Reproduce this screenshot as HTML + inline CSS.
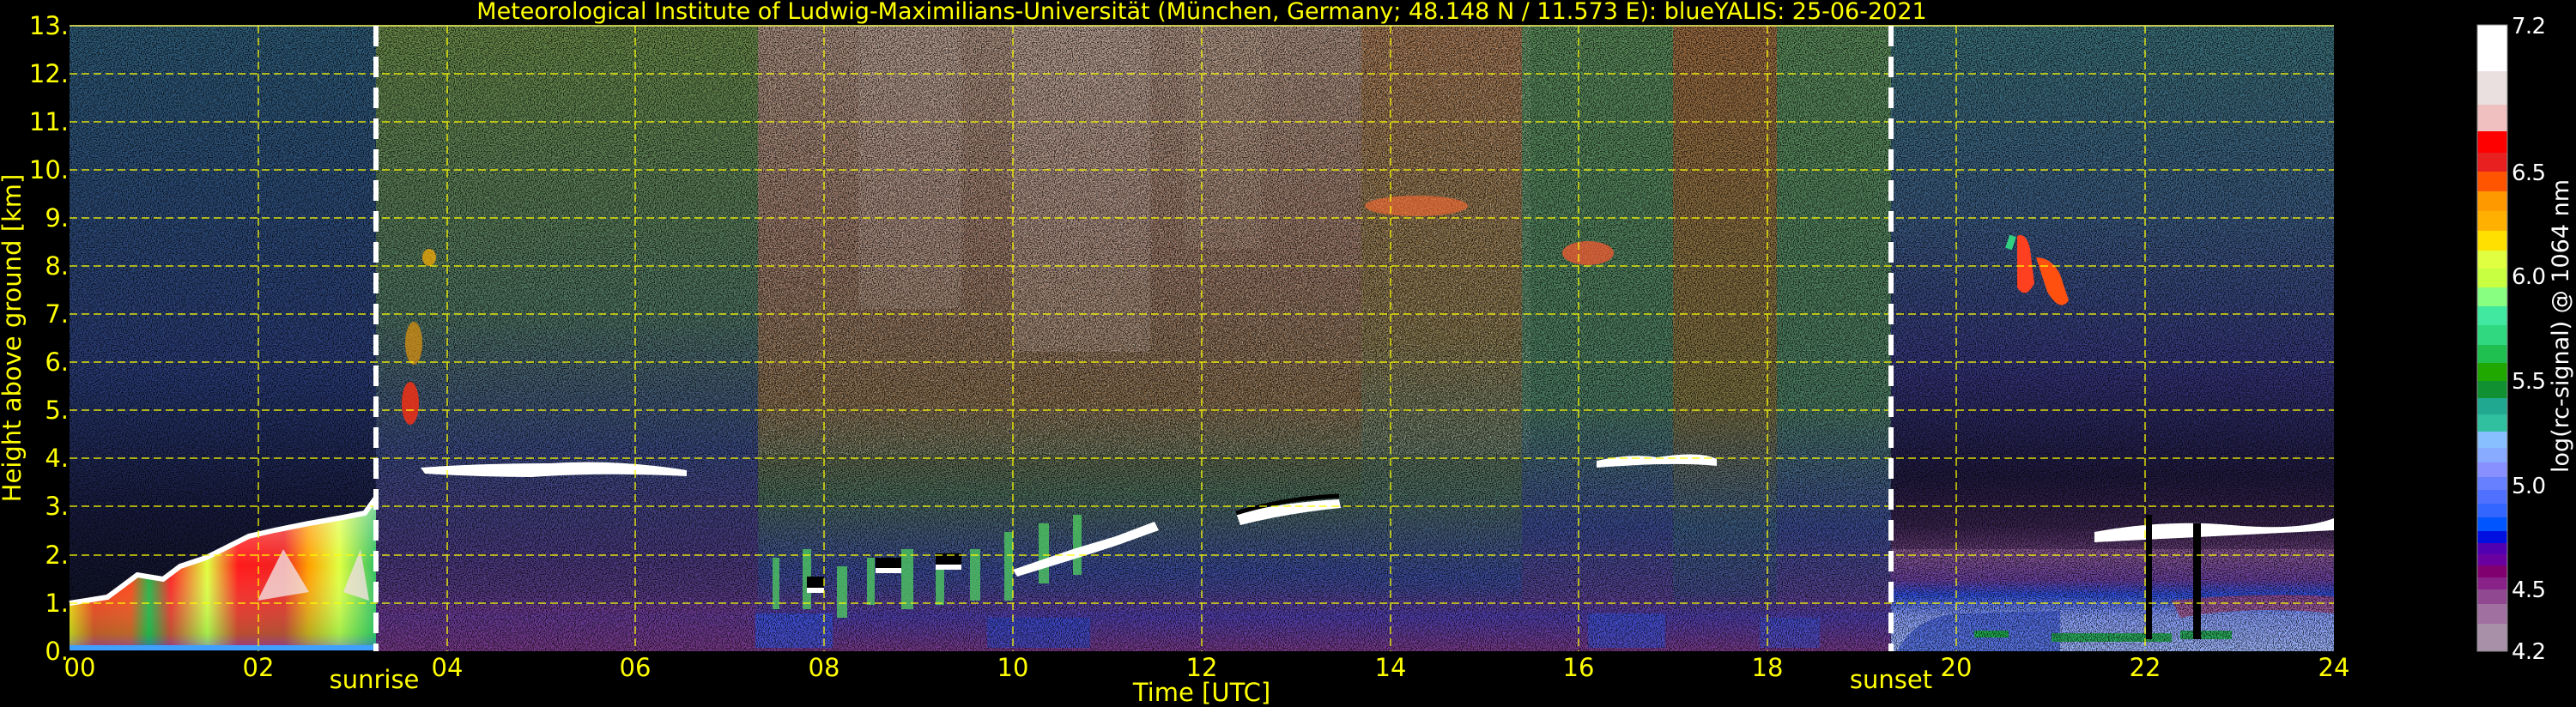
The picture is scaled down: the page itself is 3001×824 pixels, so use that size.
<!DOCTYPE html>
<html><head><meta charset="utf-8"><style>
html,body{margin:0;padding:0;background:#000;}
svg{display:block}
text{font-family:"DejaVu Sans","Liberation Sans",sans-serif;}
</style></head><body>
<svg width="3001" height="824" viewBox="0 0 3001 824" xmlns="http://www.w3.org/2000/svg">
<defs>
<filter id="spk" x="0" y="0" width="100%" height="100%">
<feTurbulence type="fractalNoise" baseFrequency="0.85" numOctaves="1" seed="3"/>
<feColorMatrix type="matrix" values="0 0 0 0 0  0 0 0 0 0  0 0 0 0 0  -9 0 0 0 4.7"/>
</filter>
<filter id="spkw" x="0" y="0" width="100%" height="100%">
<feTurbulence type="fractalNoise" baseFrequency="0.8" numOctaves="1" seed="9"/>
<feColorMatrix type="matrix" values="0 0 0 0 1  0 0 0 0 1  0 0 0 0 1  9 0 0 0 -5.2"/>
</filter>
<linearGradient id="gA" x1="0" y1="0" x2="0" y2="1">
<stop offset="0" stop-color="#2e5c78"/><stop offset="0.55" stop-color="#2a3c78"/><stop offset="0.78" stop-color="#181c40"/><stop offset="1" stop-color="#101020"/></linearGradient>
<linearGradient id="gB" x1="0" y1="0" x2="0" y2="1">
<stop offset="0" stop-color="#6a8a48"/><stop offset="0.45" stop-color="#4e7460"/><stop offset="0.68" stop-color="#3a4880"/><stop offset="0.85" stop-color="#4a3a80"/><stop offset="1" stop-color="#6a3a8a"/></linearGradient>
<linearGradient id="gC" x1="0" y1="0" x2="0" y2="1">
<stop offset="0" stop-color="#a08474"/><stop offset="0.35" stop-color="#8c6a5a"/><stop offset="0.6" stop-color="#7a6040"/><stop offset="0.75" stop-color="#4a6a58"/><stop offset="0.87" stop-color="#3a4a98"/><stop offset="1" stop-color="#6a3a90"/></linearGradient>
<linearGradient id="gD" x1="0" y1="0" x2="0" y2="1">
<stop offset="0" stop-color="#9a6c48"/><stop offset="0.5" stop-color="#7a6a40"/><stop offset="0.75" stop-color="#4a6a60"/><stop offset="0.88" stop-color="#3a4a98"/><stop offset="1" stop-color="#6a3a90"/></linearGradient>
<linearGradient id="gE" x1="0" y1="0" x2="0" y2="1">
<stop offset="0" stop-color="#5a8a58"/><stop offset="0.6" stop-color="#4a7a60"/><stop offset="0.8" stop-color="#3a4a90"/><stop offset="1" stop-color="#6a3a90"/></linearGradient>
<linearGradient id="gF" x1="0" y1="0" x2="0" y2="1">
<stop offset="0" stop-color="#9a6a40"/><stop offset="0.6" stop-color="#7a7040"/><stop offset="0.8" stop-color="#3a5a80"/><stop offset="1" stop-color="#4a3a90"/></linearGradient>
<linearGradient id="gH" x1="0" y1="0" x2="0" y2="1">
<stop offset="0" stop-color="#3a7078"/><stop offset="0.3" stop-color="#3a5a80"/><stop offset="0.55" stop-color="#34347a"/><stop offset="0.72" stop-color="#201a40"/><stop offset="0.8" stop-color="#3a2450"/><stop offset="0.86" stop-color="#7a4a88"/><stop offset="1" stop-color="#8a5a90"/></linearGradient>
<linearGradient id="aer" x1="0" y1="0" x2="1" y2="0">
<stop offset="0" stop-color="#ffd000"/><stop offset="0.08" stop-color="#ff3010"/><stop offset="0.2" stop-color="#ff4010"/><stop offset="0.26" stop-color="#20b040"/><stop offset="0.33" stop-color="#ff2020"/><stop offset="0.45" stop-color="#e0ff40"/><stop offset="0.55" stop-color="#ff1a1a"/><stop offset="0.7" stop-color="#f02020"/><stop offset="0.78" stop-color="#ffa000"/><stop offset="0.88" stop-color="#e0ff40"/><stop offset="1" stop-color="#30c060"/></linearGradient>
<linearGradient id="aerv" x1="0" y1="0" x2="0" y2="1">
<stop offset="0" stop-color="#fff" stop-opacity="0.45"/><stop offset="0.45" stop-color="#fff" stop-opacity="0"/><stop offset="0.9" stop-color="#20c060" stop-opacity="0.3"/><stop offset="1" stop-color="#3050ff" stop-opacity="0.5"/></linearGradient>
<linearGradient id="bl" x1="0" y1="0" x2="0" y2="1">
<stop offset="0" stop-color="#6a3a90" stop-opacity="0"/><stop offset="0.4" stop-color="#5040b0"/><stop offset="1" stop-color="#7a3a8a"/></linearGradient>
<linearGradient id="ev" x1="0" y1="0" x2="0" y2="1">
<stop offset="0" stop-color="#8a5a90"/><stop offset="0.3" stop-color="#6a40a0"/><stop offset="0.45" stop-color="#3050e0"/><stop offset="0.65" stop-color="#8aa0ff"/><stop offset="1" stop-color="#a0b8ff"/></linearGradient>
</defs>

<rect x="81" y="30" width="357" height="729" fill="url(#gA)"/>
<rect x="438" y="30" width="445" height="729" fill="url(#gB)"/>
<rect x="883" y="30" width="703" height="729" fill="url(#gC)"/>
<rect x="1586" y="30" width="187" height="729" fill="url(#gD)"/>
<rect x="1773" y="30" width="176" height="729" fill="url(#gE)"/>
<rect x="1949" y="30" width="121" height="729" fill="url(#gF)"/>
<rect x="2070" y="30" width="133" height="729" fill="url(#gE)"/>
<rect x="2203" y="30" width="516" height="729" fill="url(#gH)"/>
<rect x="1000" y="30" width="120" height="330" fill="#c8b8b0" opacity="0.25"/>
<rect x="1180" y="30" width="160" height="380" fill="#d0c0b8" opacity="0.25"/>
<rect x="1380" y="30" width="90" height="260" fill="#c0a890" opacity="0.2"/>
<!-- ground layers -->
<rect x="438" y="690" width="1765" height="69" fill="url(#bl)"/>
<rect x="440" y="705" width="440" height="54" fill="#7a3a8a" opacity="0.6"/>
<rect x="880" y="715" width="90" height="40" fill="#3a5aee" opacity="0.7"/>
<rect x="1150" y="720" width="120" height="35" fill="#3050e0" opacity="0.6"/>
<rect x="1850" y="715" width="90" height="40" fill="#3a5aee" opacity="0.6"/>
<rect x="2050" y="720" width="70" height="35" fill="#3a5aee" opacity="0.5"/>
<!-- evening layers -->
<rect x="2203" y="640" width="516" height="119" fill="url(#ev)"/>
<path d="M2210 759 Q2230 720 2280 715 L2400 712 L2400 759Z" fill="#3050e0" opacity="0.6"/>
<rect x="2300" y="735" width="40" height="8" fill="#20b050"/>
<rect x="2390" y="738" width="140" height="10" fill="#20b050" opacity="0.9"/>
<rect x="2540" y="735" width="60" height="10" fill="#20b050" opacity="0.9"/>
<path d="M2530 700 Q2620 690 2719 695 L2719 715 Q2620 705 2540 720Z" fill="#b04878" opacity="0.7"/>

<!-- speckle -->
<rect x="81" y="30" width="2638" height="729" filter="url(#spk)" opacity="0.7"/>
<rect x="883" y="30" width="900" height="500" filter="url(#spkw)" opacity="0.45"/>

<!-- cloud line evening -->
<path d="M2440 620 Q2520 605 2600 612 T2719 604 L2719 618 L2440 632Z" fill="#fff"/>
<rect x="2500" y="600" width="7" height="145" fill="#000"/>
<rect x="2555" y="610" width="9" height="135" fill="#000"/>

<!-- aerosol blob (night) -->
<path d="M81 703 L100 700 L125 696 L140 685 L160 670 L190 675 L210 660 L240 650 L260 640 L290 625 L320 618 L360 610 L400 603 L425 598 L438 580 L438 755 L81 755Z" fill="url(#aer)"/>
<path d="M81 703 L100 700 L125 696 L140 685 L160 670 L190 675 L210 660 L240 650 L260 640 L290 625 L320 618 L360 610 L400 603 L425 598 L438 580 L438 755 L81 755Z" fill="url(#aerv)"/>
<path d="M81 703 L100 700 L125 696 L140 685 L160 670 L190 675 L210 660 L240 650 L260 640 L290 625 L320 618 L360 610 L400 603 L425 598 L438 580" fill="none" stroke="#fff" stroke-width="6"/>
<path d="M300 700 L330 640 L360 690Z M400 690 L420 640 L430 700Z" fill="#f2e0e0" opacity="0.8"/>
<rect x="81" y="752" width="357" height="6" fill="#40a0ff"/>

<!-- streaks near 1-2km, 7.3-11h -->
<g fill="#50d060" opacity="0.75">
<rect x="900" y="650" width="8" height="60"/><rect x="935" y="640" width="10" height="70"/><rect x="975" y="660" width="12" height="60"/><rect x="1010" y="650" width="9" height="55"/><rect x="1050" y="640" width="14" height="70"/><rect x="1090" y="650" width="10" height="55"/><rect x="1130" y="640" width="12" height="60"/><rect x="1170" y="620" width="10" height="80"/><rect x="1210" y="610" width="12" height="70"/><rect x="1250" y="600" width="10" height="70"/>
</g>
<g fill="#fff">
<path d="M1180 664 L1250 640 L1300 625 L1345 608 L1350 618 L1300 636 L1250 652 L1185 672Z"/>
<rect x="1020" y="662" width="30" height="6"/><rect x="1090" y="658" width="30" height="6"/><rect x="940" y="685" width="20" height="6"/>
</g>
<g fill="#000">
<rect x="1020" y="650" width="30" height="12"/><rect x="1090" y="645" width="30" height="13"/><rect x="940" y="672" width="20" height="13"/>
</g>
<!-- other clouds -->
<path d="M1440 598 Q1500 585 1560 582 L1562 592 Q1500 598 1445 612Z" fill="#fff"/>
<path d="M1440 598 Q1500 580 1560 578" fill="none" stroke="#000" stroke-width="5"/>
<path d="M490 545 Q560 540 640 540 Q720 535 800 548 L800 555 Q700 550 620 556 Q560 556 495 552Z" fill="#fff"/>
<path d="M1860 537 Q1900 528 1930 533 Q1980 525 2000 535 L2000 543 Q1950 538 1860 545Z" fill="#fff"/>
<path d="M2350 275 Q2360 270 2365 290 L2370 330 Q2360 350 2350 335Z" fill="#ff4020"/>
<path d="M2372 300 Q2390 300 2400 320 L2410 350 Q2400 365 2385 340Z" fill="#ff5010"/>
<path d="M2340 290 L2345 275" stroke="#30d080" stroke-width="8"/>
<ellipse cx="1650" cy="240" rx="60" ry="12" fill="#ff6a30" opacity="0.6"/>
<ellipse cx="1850" cy="295" rx="30" ry="14" fill="#ff5a30" opacity="0.7"/>
<ellipse cx="500" cy="300" rx="8" ry="10" fill="#ffb000" opacity="0.7"/>
<ellipse cx="478" cy="470" rx="10" ry="25" fill="#ff3010" opacity="0.8"/>
<ellipse cx="482" cy="400" rx="10" ry="25" fill="#ffa000" opacity="0.6"/>

<!-- grid -->
<g stroke="#ffff00" stroke-width="1.5" stroke-dasharray="9,5" opacity="0.85">
<line x1="81" y1="86" x2="2719" y2="86"/><line x1="81" y1="142" x2="2719" y2="142"/><line x1="81" y1="198" x2="2719" y2="198"/><line x1="81" y1="254" x2="2719" y2="254"/><line x1="81" y1="310" x2="2719" y2="310"/><line x1="81" y1="366" x2="2719" y2="366"/><line x1="81" y1="422" x2="2719" y2="422"/><line x1="81" y1="478" x2="2719" y2="478"/><line x1="81" y1="534" x2="2719" y2="534"/><line x1="81" y1="590" x2="2719" y2="590"/><line x1="81" y1="647" x2="2719" y2="647"/><line x1="81" y1="703" x2="2719" y2="703"/>
<line x1="301" y1="30" x2="301" y2="759"/><line x1="521" y1="30" x2="521" y2="759"/><line x1="740" y1="30" x2="740" y2="759"/><line x1="960" y1="30" x2="960" y2="759"/><line x1="1180" y1="30" x2="1180" y2="759"/><line x1="1400" y1="30" x2="1400" y2="759"/><line x1="1620" y1="30" x2="1620" y2="759"/><line x1="1839" y1="30" x2="1839" y2="759"/><line x1="2059" y1="30" x2="2059" y2="759"/><line x1="2279" y1="30" x2="2279" y2="759"/><line x1="2499" y1="30" x2="2499" y2="759"/>
</g>
<line x1="81" y1="30" x2="2719" y2="30" stroke="#ffff66" stroke-width="1.5"/>
<line x1="438" y1="30" x2="438" y2="759" stroke="#fff" stroke-width="6" stroke-dasharray="24,12"/>
<line x1="2203" y1="30" x2="2203" y2="759" stroke="#fff" stroke-width="6" stroke-dasharray="24,12"/>

<g fill="#ffff00" font-size="29" text-anchor="end">
<text x="80" y="40">13.</text><text x="80" y="96">12.</text><text x="80" y="152">11.</text><text x="80" y="208">10.</text><text x="80" y="264">9.</text><text x="80" y="320">8.</text><text x="80" y="376">7.</text><text x="80" y="432">6.</text><text x="80" y="488">5.</text><text x="80" y="544">4.</text><text x="80" y="600">3.</text><text x="80" y="657">2.</text><text x="80" y="713">1.</text><text x="80" y="769">0.</text>
</g>
<g fill="#ffff00" font-size="29" text-anchor="middle">
<text x="93" y="788">00</text><text x="301" y="788">02</text><text x="521" y="788">04</text><text x="740" y="788">06</text><text x="960" y="788">08</text><text x="1180" y="788">10</text><text x="1400" y="788">12</text><text x="1620" y="788">14</text><text x="1839" y="788">16</text><text x="2059" y="788">18</text><text x="2279" y="788">20</text><text x="2499" y="788">22</text><text x="2719" y="788">24</text>
<text x="436" y="802">sunrise</text><text x="2203" y="802">sunset</text>
<text x="1400" y="817">Time [UTC]</text>
<text x="1400" y="22" font-size="27">Meteorological Institute of Ludwig-Maximilians-Universität (München, Germany; 48.148 N / 11.573 E):    blueYALIS: 25-06-2021</text>
<text transform="translate(24,394) rotate(-90)" font-size="29">Height above ground [km]</text>
</g>

<g>
<rect x="2886" y="29" width="35" height="54" fill="#ffffff"/>
<rect x="2886" y="83" width="35" height="39" fill="#ebe0e0"/>
<rect x="2886" y="122" width="35" height="31" fill="#f0c0c0"/>
<rect x="2886" y="153" width="35" height="25" fill="#ff0000"/>
<rect x="2886" y="178" width="35" height="22" fill="#e82020"/>
<rect x="2886" y="200" width="35" height="23" fill="#ff5500"/>
<rect x="2886" y="223" width="35" height="23" fill="#ff9900"/>
<rect x="2886" y="246" width="35" height="23" fill="#ffb000"/>
<rect x="2886" y="269" width="35" height="23" fill="#ffe000"/>
<rect x="2886" y="292" width="35" height="21" fill="#e0ff40"/>
<rect x="2886" y="313" width="35" height="22" fill="#c8ff40"/>
<rect x="2886" y="335" width="35" height="22" fill="#88ff80"/>
<rect x="2886" y="357" width="35" height="22" fill="#40e8a0"/>
<rect x="2886" y="379" width="35" height="23" fill="#30d880"/>
<rect x="2886" y="402" width="35" height="21" fill="#20c050"/>
<rect x="2886" y="423" width="35" height="21" fill="#20a800"/>
<rect x="2886" y="444" width="35" height="20" fill="#109030"/>
<rect x="2886" y="464" width="35" height="19" fill="#20a890"/>
<rect x="2886" y="483" width="35" height="20" fill="#30c0a0"/>
<rect x="2886" y="503" width="35" height="19" fill="#88c0ff"/>
<rect x="2886" y="522" width="35" height="17" fill="#88aaff"/>
<rect x="2886" y="539" width="35" height="17" fill="#8890ff"/>
<rect x="2886" y="556" width="35" height="15" fill="#6680ff"/>
<rect x="2886" y="571" width="35" height="16" fill="#5070ff"/>
<rect x="2886" y="587" width="35" height="16" fill="#3366ff"/>
<rect x="2886" y="603" width="35" height="16" fill="#0055ff"/>
<rect x="2886" y="619" width="35" height="14" fill="#0010e0"/>
<rect x="2886" y="633" width="35" height="13" fill="#5000b0"/>
<rect x="2886" y="646" width="35" height="13" fill="#6a00a0"/>
<rect x="2886" y="659" width="35" height="14" fill="#800070"/>
<rect x="2886" y="673" width="35" height="14" fill="#882288"/>
<rect x="2886" y="687" width="35" height="17" fill="#904890"/>
<rect x="2886" y="704" width="35" height="23" fill="#a070a0"/>
<rect x="2886" y="727" width="35" height="32" fill="#a890a8"/>
<rect x="2886" y="29" width="35" height="730" fill="none" stroke="#888" stroke-width="1"/>
</g>
<g fill="#fff" font-size="26">
<text x="2926" y="39" textLength="40">7.2</text><text x="2926" y="210" textLength="40">6.5</text><text x="2926" y="331" textLength="40">6.0</text><text x="2926" y="453" textLength="40">5.5</text><text x="2926" y="575" textLength="40">5.0</text><text x="2926" y="696" textLength="40">4.5</text><text x="2926" y="768" textLength="40">4.2</text>
<text transform="translate(2992,380) rotate(-90)" text-anchor="middle" font-size="27">log(rc-signal) @ 1064 nm</text>
</g>
</svg>
</body></html>
